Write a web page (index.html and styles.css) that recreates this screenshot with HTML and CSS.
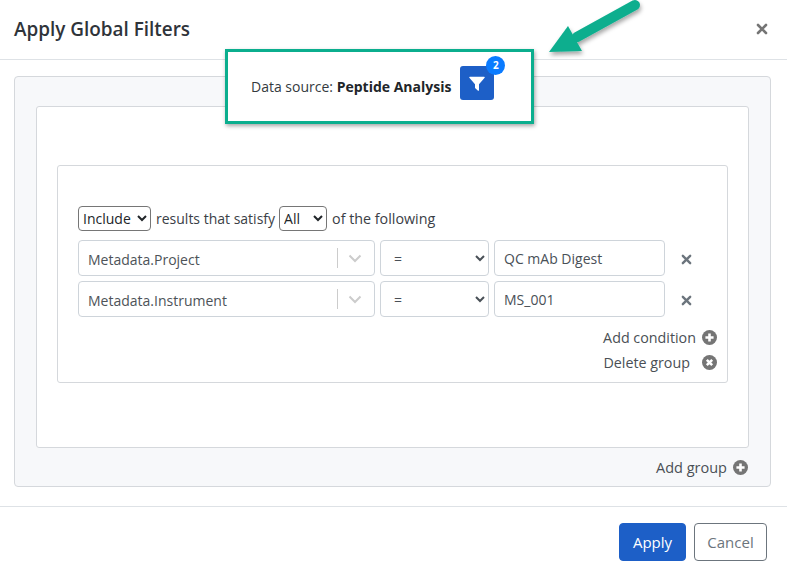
FILE: index.html
```html
<!DOCTYPE html>
<html lang="en">
<head>
<meta charset="utf-8">
<title>Apply Global Filters</title>
<link rel="stylesheet" href="styles.css">
</head>
<body>
<div class="modal">
  <header class="modal-header">
    <h1 class="modal-title">Apply Global Filters</h1>
    <svg class="close" viewBox="0 0 12 12" width="12" height="12"><path d="M2 2l8 8M10 2l-8 8" stroke="#757575" stroke-width="2.6" stroke-linecap="round"/></svg>
  </header>
  <main class="modal-body">
    <section class="panel">
      <div class="outer-group">
        <div class="group">
          <div class="sentence">
            <select class="mini"><option>Include</option></select>
            <span>results that satisfy</span>
            <select class="mini mini-all"><option>All</option></select>
            <span class="tail">of the following</span>
          </div>
          <div class="cond">
            <div class="field">
              <span class="field-value">Metadata.Project</span>
              <span class="sep"></span>
              <svg class="chev" viewBox="0 0 14 9" width="14" height="9"><path d="M1.5 1.5L7 7l5.500-5.500" fill="none" stroke="#ccc" stroke-width="2"/></svg>
            </div>
            <select class="op"><option>=</option></select>
            <div class="val">QC mAb Digest</div>
            <svg class="rm" viewBox="0 0 12 12" width="11" height="11"><path d="M2 2l8 8M10 2l-8 8" stroke="#6c757d" stroke-width="2.600" stroke-linecap="round"/></svg>
          </div>
          <div class="cond">
            <div class="field">
              <span class="field-value">Metadata.Instrument</span>
              <span class="sep"></span>
              <svg class="chev" viewBox="0 0 14 9" width="14" height="9"><path d="M1.500 1.500L7 7l5.500-5.500" fill="none" stroke="#ccc" stroke-width="2"/></svg>
            </div>
            <select class="op"><option>=</option></select>
            <div class="val">MS_001</div>
            <svg class="rm" viewBox="0 0 12 12" width="11" height="11"><path d="M2 2l8 8M10 2l-8 8" stroke="#6c757d" stroke-width="2.600" stroke-linecap="round"/></svg>
          </div>
          <div class="action action-first">
            <span>Add condition</span>
            <svg class="ci" viewBox="0 0 14 14" width="15" height="15"><circle cx="7" cy="7" r="7" fill="#757575"/><path d="M7 3.200v7.600M3.200 7h7.600" stroke="#fff" stroke-width="2.400"/></svg>
          </div>
          <div class="action">
            <span class="del-label">Delete group</span>
            <svg class="ci" viewBox="0 0 14 14" width="15" height="15"><circle cx="7" cy="7" r="7" fill="#757575"/><path d="M4.500 4.500l5 5M9.500 4.500l-5 5" stroke="#fff" stroke-width="2.400"/></svg>
          </div>
        </div>
      </div>
      <div class="action add-group">
        <span>Add group</span>
        <svg class="ci" viewBox="0 0 14 14" width="15" height="15"><circle cx="7" cy="7" r="7" fill="#757575"/><path d="M7 3.200v7.600M3.200 7h7.600" stroke="#fff" stroke-width="2.400"/></svg>
      </div>
    </section>
  </main>
  <footer class="modal-footer">
    <button class="btn btn-primary">Apply</button>
    <button class="btn btn-outline">Cancel</button>
  </footer>
</div>

<div class="callout">
  <span>Data source: <b>Peptide Analysis</b></span>
  <span class="filter-btn">
    <svg viewBox="0 0 16 16" width="16" height="16"><path d="M0.800 0.800h14.400a.6.6 0 0 1 .45 1L10 8.300v5.900a.6.6 0 0 1-1 .45L6.300 12.300a.8.8 0 0 1-.3-.6V8.300L.35 1.800a.6.6 0 0 1 .45-1z" fill="#fff"/></svg>
    <span class="badge">2</span>
  </span>
</div>

<svg class="arrow" viewBox="0 0 110 70" width="110" height="70">
  <defs><filter id="sh" x="-20%" y="-20%" width="150%" height="150%"><feDropShadow dx="1" dy="3" stdDeviation="2" flood-color="#000" flood-opacity=".35"/></filter></defs>
  <g filter="url(#sh)">
    <path d="M90 5L32 37" stroke="#0bae8e" stroke-width="10" stroke-linecap="round" fill="none"/>
    <path d="M4 52L23 26 37 51z" fill="#0bae8e"/>
  </g>
</svg>
</body>
</html>
```
FILE: styles.css
```css
* { box-sizing: border-box; }
html, body { margin: 0; padding: 0; background: #fff; }
body {
  width: 787px;
  height: 577px;
  overflow: hidden;
  position: relative;
  font-family: "Open Sans", "Noto Sans", sans-serif;
  font-size: 14px;
  color: #343a40;
}
.modal { display: flex; flex-direction: column; height: 577px; }
.modal-header {
  height: 60px;
  border-bottom: 1px solid #dee2e6;
  display: flex;
  align-items: center;
  justify-content: space-between;
  padding: 0 19px 2px 14px;
}
.modal-title { margin: 0; font-size: 18.900px; font-weight: 600; color: #2f343a; }
.modal-body { padding: 16px 16px 0 14px; }
.panel {
  height: 411px;
  background: #f7f8fa;
  border: 1px solid #d5d8dc;
  border-radius: 4px;
  padding: 29px 21px 0 21px;
}
.outer-group {
  height: 342px;
  background: #fff;
  border: 1px solid #d5d8dc;
  border-radius: 3px;
  padding: 58px 20px 0 20px;
}
.group {
  height: 218px;
  border: 1px solid #d5d8dc;
  border-radius: 3px;
  padding: 40px 10px 0 20px;
}
.sentence { display: flex; align-items: center; gap: 5px; height: 25px; margin-bottom: 9px; color: #3a4046; }
.tail { font-size: 14.300px; }
.mini {
  width: 73px;
  height: 25px;
  padding: 0;
  font: 14px "Open Sans", sans-serif;
  color: #212529;
  background: #fff;
  border: 1px solid #767676;
  border-radius: 4px;
}
.mini-all { width: 48px; margin-left: -1px; }
.cond { display: flex; align-items: center; height: 36px; margin-bottom: 5px; }
.field {
  width: 297px;
  height: 36px;
  display: flex;
  align-items: center;
  border: 1px solid #ced4da;
  border-radius: 4px;
  padding: 2px 0 0 9px;
  margin-right: 5px;
  color: #4d5358;
}
.field-value { flex: 1; }
.sep { width: 1px; height: 20px; background: #ccc; margin: -2px 10px 0 0; }
.chev { margin: -2px 12px 0 0; }
.op {
  width: 109px;
  height: 36px;
  margin-right: 5px;
  padding: 0 0 0 9px;
  font: 14px "Open Sans", sans-serif;
  color: #495057;
  background: #fff;
  border: 1px solid #ced4da;
  border-radius: 4px;
}
.val {
  width: 171px;
  height: 36px;
  line-height: 36px;
  padding-left: 9px;
  border: 1px solid #ced4da;
  border-radius: 4px;
  color: #495057;
}
.rm { margin: 2px 0 0 16px; }
.action { display: flex; justify-content: flex-end; align-items: center; gap: 6px; height: 25px; color: #4a4f55; font-size: 14.300px; }
.action-first { margin-top: 8px; }
.del-label { margin-right: 6px; }
.add-group { margin: 7px 1px 0 0; font-size: 14.500px; }
.modal-footer {
  margin-top: 19px;
  border-top: 1px solid #dee2e6;
  padding: 16px 20px 0 0;
  display: flex;
  justify-content: flex-end;
  gap: 8px;
}
.btn {
  height: 38px;
  border-radius: 4px;
  font: 15px "Open Sans", sans-serif;
}
.btn-primary { width: 67px; background: #1d5fc7; border: 1px solid #1d5fc7; color: #fff; }
.btn-outline { width: 73px; background: #fff; border: 1px solid #6c757d; color: #6c757d; }
.callout {
  position: absolute;
  left: 225px;
  top: 49px;
  width: 309px;
  height: 75px;
  background: #fff;
  border: 3px solid #0bae8e;
  box-shadow: 1px 2px 4px rgba(0,0,0,.35);
  display: flex;
  align-items: center;
  padding-left: 23px;
  gap: 9px;
  color: #343a40;
}
.callout b { color: #212529; font-weight: 700; }
.filter-btn {
  position: relative;
  width: 34px;
  height: 34px;
  margin-top: -8px;
  background: #1d5fc7;
  border-radius: 3px;
  display: flex;
  align-items: center;
  justify-content: center;
}
.filter-btn svg { margin-top: 3px; }
.badge {
  position: absolute;
  top: -10px;
  right: -11px;
  width: 19px;
  height: 19px;
  border-radius: 50%;
  background: #0a7bff;
  color: #fff;
  font-size: 10px;
  font-weight: 700;
  line-height: 19px;
  text-align: center;
}
.arrow { position: absolute; left: 545px; top: 0; }
```
